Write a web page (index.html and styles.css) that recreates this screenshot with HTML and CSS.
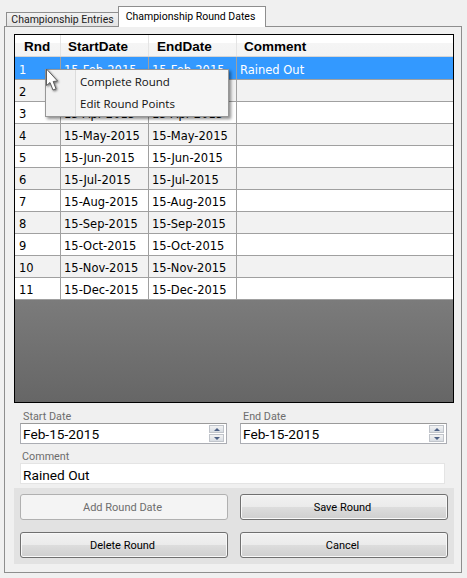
FILE: index.html
```html
<!DOCTYPE html>
<html lang="en">
<head>
  <meta charset="UTF-8" />
  <title>Championship Round Dates</title>
  <link rel="stylesheet" href="styles.css">
</head>
<body>
  <div class="tabs">
    <div class="tab">Championship Entries</div>
    <div class="tab active">Championship Round Dates</div>
  </div>

  <div class="panel">
    <div class="grid">
      <div class="row head">
        <div class="cell">Rnd</div>
        <div class="cell">StartDate</div>
        <div class="cell">EndDate</div>
        <div class="cell">Comment</div>
      </div>
      <div class="row selected">
        <div class="cell">1</div>
        <div class="cell">15-Feb-2015</div>
        <div class="cell">15-Feb-2015</div>
        <div class="cell">Rained Out</div>
      </div>
      <div class="row">
        <div class="cell">2</div>
        <div class="cell">15-Mar-2015</div>
        <div class="cell">15-Mar-2015</div>
        <div class="cell"></div>
      </div>
      <div class="row">
        <div class="cell">3</div>
        <div class="cell">15-Apr-2015</div>
        <div class="cell">15-Apr-2015</div>
        <div class="cell"></div>
      </div>
      <div class="row">
        <div class="cell">4</div>
        <div class="cell">15-May-2015</div>
        <div class="cell">15-May-2015</div>
        <div class="cell"></div>
      </div>
      <div class="row">
        <div class="cell">5</div>
        <div class="cell">15-Jun-2015</div>
        <div class="cell">15-Jun-2015</div>
        <div class="cell"></div>
      </div>
      <div class="row">
        <div class="cell">6</div>
        <div class="cell">15-Jul-2015</div>
        <div class="cell">15-Jul-2015</div>
        <div class="cell"></div>
      </div>
      <div class="row">
        <div class="cell">7</div>
        <div class="cell">15-Aug-2015</div>
        <div class="cell">15-Aug-2015</div>
        <div class="cell"></div>
      </div>
      <div class="row">
        <div class="cell">8</div>
        <div class="cell">15-Sep-2015</div>
        <div class="cell">15-Sep-2015</div>
        <div class="cell"></div>
      </div>
      <div class="row">
        <div class="cell">9</div>
        <div class="cell">15-Oct-2015</div>
        <div class="cell">15-Oct-2015</div>
        <div class="cell"></div>
      </div>
      <div class="row">
        <div class="cell">10</div>
        <div class="cell">15-Nov-2015</div>
        <div class="cell">15-Nov-2015</div>
        <div class="cell"></div>
      </div>
      <div class="row">
        <div class="cell">11</div>
        <div class="cell">15-Dec-2015</div>
        <div class="cell">15-Dec-2015</div>
        <div class="cell"></div>
      </div>
      <div class="grid-empty"></div>

      <div class="menu">
        <div class="menu-item">Complete Round</div>
        <div class="menu-item">Edit Round Points</div>
      </div>
      <svg class="cursor" width="15" height="25" viewBox="0 0 15 25">
        <path d="M1.5 1 L1.5 17.5 L5 14.5 L8 22 L11 20.8 L8.2 13.5 L12.5 13 Z" fill="#fff" stroke="#5f5f5f" stroke-width="1"/>
      </svg>
    </div>

    <div class="dates">
      <div class="field">
        <label class="label">Start Date</label>
        <div class="input date">
          <span>Feb-15-2015</span>
          <span class="spin"><i class="up"></i><i class="down"></i></span>
        </div>
      </div>
      <div class="field">
        <label class="label">End Date</label>
        <div class="input date">
          <span>Feb-15-2015</span>
          <span class="spin"><i class="up"></i><i class="down"></i></span>
        </div>
      </div>
    </div>

    <div class="comment">
      <label class="label">Comment</label>
      <div class="input text">Rained Out</div>
    </div>

    <div class="actions">
      <button class="btn" disabled>Add Round Date</button>
      <button class="btn">Save Round</button>
      <button class="btn">Delete Round</button>
      <button class="btn">Cancel</button>
    </div>
  </div>
</body>
</html>
```

FILE: styles.css
```css
html, body {
  margin: 0;
  height: 578px;
  overflow: hidden;
}

body {
  background: #f0f0f0;
  font-family: Roboto, "Noto Sans", sans-serif;
  color: #000;
  padding: 6px 4px 0;
  box-sizing: border-box;
  width: 467px;
}

.tabs {
  display: flex;
  align-items: flex-end;
  padding-left: 2px;
  height: 20px;
  position: relative;
  z-index: 1;
}

.tab {
  height: 13px;
  width: 111px;
  background: linear-gradient(#f2f2f2, #e3e3e3);
  border: 1px solid #8e8e8e;
  border-right: none;
  border-bottom: none;
  font-size: 10.5px;
  line-height: 14px;
  text-align: center;
  color: #222;
  white-space: nowrap;
}

.tab.active {
  height: 20px;
  width: 143px;
  padding-right: 3px;
  background: #fff;
  border-right: 1px solid #8e8e8e;
  line-height: 19px;
  margin-bottom: -1px;
  color: #000;
}

.panel {
  width: 458px;
  height: 547px;
  box-sizing: border-box;
  border: 1px solid #8e8e8e;
  padding: 7px 9px 0;
  background: #f0f0f0;
}

.grid {
  position: relative;
  width: 440px;
  height: 369px;
  box-sizing: border-box;
  border: 1px solid #000;
  background: #fff;
  display: flex;
  flex-direction: column;
}

.row {
  display: grid;
  grid-template-columns: 46px 88px 88px 1fr;
  height: 22px;
  box-sizing: border-box;
  border-bottom: 1px solid #a0a0a0;
  font-family: "DejaVu Sans", sans-serif;
  font-size: 11.5px;
  line-height: 23px;
  background: #fff;
  flex: none;
}

.row:nth-child(odd) {
  background: #f2f2f2;
}

.row.selected {
  height: 23px;
  background: #3399ff;
  color: #fff;
}

.cell {
  padding: 1px 0 0 3px;
  border-right: 1px solid #a0a0a0;
  white-space: nowrap;
  overflow: hidden;
}

.cell:first-child {
  padding-left: 4px;
}

.selected .cell {
  padding-top: 2px;
}

.cell:last-child {
  border-right: none;
}

.row.head {
  height: 22px;
  font-family: "Liberation Sans", sans-serif;
  font-weight: bold;
  font-size: 13.5px;
  line-height: 24px;
  background: linear-gradient(#fff 0, #fff 40%, #f5f5f5 40%, #f3f3f3 100%);
  border-bottom: 1px solid #d5d5d5;
}

.row.head .cell {
  border-right-color: #e4e4e4;
  padding: 0 0 0 7px;
}

.row.head .cell:first-child {
  padding-left: 9px;
}

.row.head .cell:nth-child(3) {
  padding-left: 8px;
}

.grid-empty {
  flex: 1;
  background: linear-gradient(#7b7b7b, #666);
}

.menu {
  position: absolute;
  left: 30px;
  top: 34px;
  width: 184px;
  height: 48px;
  box-sizing: border-box;
  background: linear-gradient(90deg, #f1f1f1 0, #f1f1f1 29px, #dcdcdc 29px, #dcdcdc 30px, #f5f5f5 30px);
  border: 1px solid #979797;
  box-shadow: 2px 2px 3px rgba(0, 0, 0, 0.45);
  padding-top: 1px;
}

.menu-item {
  height: 22px;
  line-height: 22px;
  padding-left: 34px;
  font-family: "Open Sans", sans-serif;
  font-size: 11.5px;
  color: #111;
  white-space: nowrap;
}

.cursor {
  position: absolute;
  left: 30px;
  top: 33px;
  filter: drop-shadow(1px 1px 1px rgba(0, 0, 0, 0.55));
}

.dates {
  display: flex;
  gap: 13px;
  margin-top: 6px;
  padding-left: 6px;
}

.field {
  width: 207px;
}

.label {
  display: block;
  height: 14px;
  font-size: 10.8px;
  line-height: 16px;
  color: #6d6d6d;
  padding-left: 3px;
}

.input {
  background: #fff;
  box-sizing: border-box;
  font-size: 13.7px;
  color: #000;
}

.input.date {
  height: 21px;
  border: 1px solid #abadb3;
  border-top-color: #9a9a9a;
  display: flex;
  justify-content: space-between;
  align-items: center;
  padding: 0 2px;
  line-height: 19px;
}

.input.date span:first-child {
  padding-top: 1px;
}

.spin {
  display: flex;
  flex-direction: column;
  width: 15px;
  height: 17px;
  gap: 1px;
}

.spin i {
  flex: 1;
  display: flex;
  align-items: center;
  justify-content: center;
  background: linear-gradient(#f3f3f3, #d8dde3);
  border: 1px solid #c0c4ca;
}

.spin i::after {
  content: "";
  border-left: 3px solid transparent;
  border-right: 3px solid transparent;
}

.spin .up::after {
  border-bottom: 3px solid #4d6185;
}

.spin .down::after {
  border-top: 3px solid #4d6185;
}

.comment {
  margin-top: 5px;
  padding-left: 6px;
}

.comment .label {
  padding-left: 2px;
}

.input.text {
  width: 425px;
  height: 21px;
  line-height: 21px;
  border: 1px solid #e4e4e4;
  padding: 1px 0 0 2px;
}

.actions {
  display: grid;
  grid-template-columns: 208px 208px;
  grid-auto-rows: 26px;
  gap: 12px;
  width: 440px;
  height: 76px;
  box-sizing: border-box;
  margin-top: 4px;
  padding: 6px;
  background: #e2e2e2;
}

.btn {
  font-family: Roboto, "Noto Sans", sans-serif;
  font-size: 11px;
  color: #000;
  padding: 1px 3px 0 0;
  border: 1px solid #707070;
  border-radius: 3px;
  background: linear-gradient(#f2f2f2 0, #ebebeb 48%, #dddddd 50%, #cfcfcf 100%);
  box-shadow: inset 0 0 0 1px #f8f8f8;
}

.btn:disabled {
  color: #6d6d6d;
  border-color: #b0b0b0;
  background: #f4f4f4;
  box-shadow: none;
}
```
